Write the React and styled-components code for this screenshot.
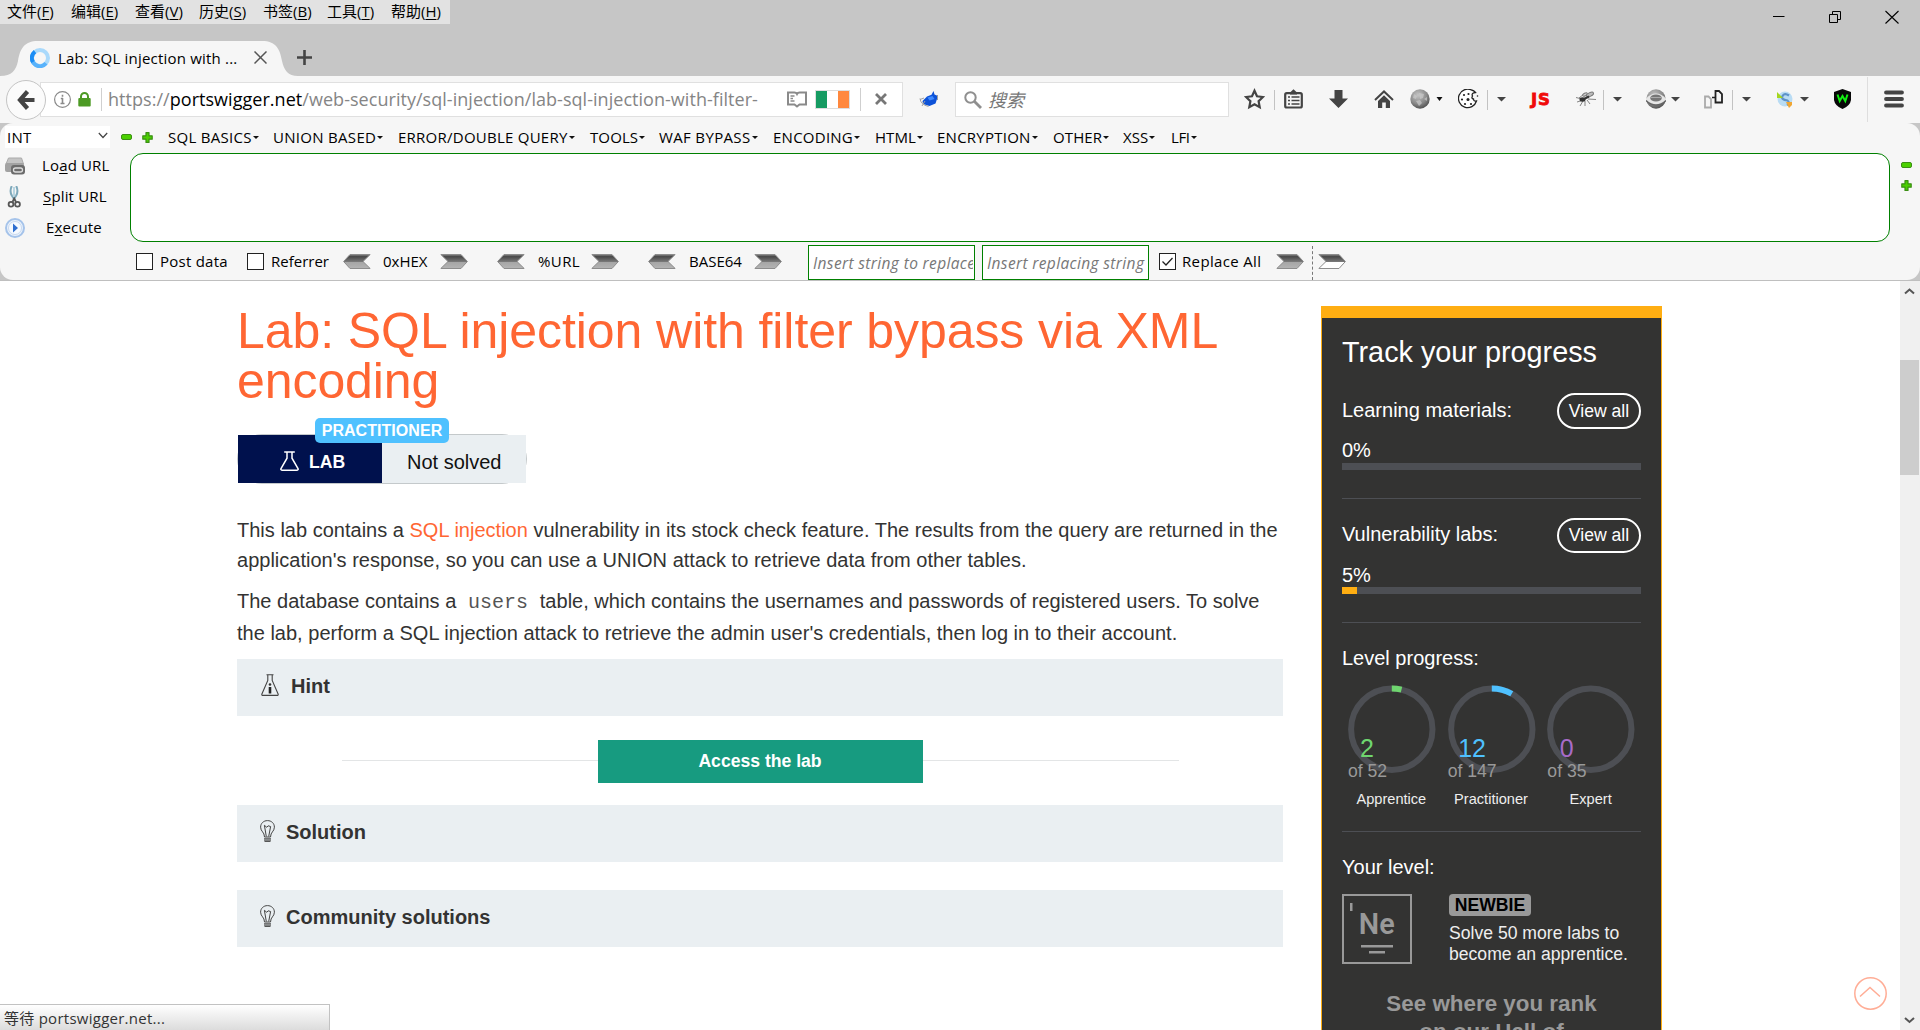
import React from 'react';
import styled, { createGlobalStyle } from 'styled-components';

const UI = `"Open Sans", "Noto Sans CJK SC", sans-serif`;
const WEB = `"Liberation Sans", Arial, sans-serif`;

const Global = createGlobalStyle`
  * { box-sizing: border-box; }
  html, body { margin: 0; padding: 0; background: #fff; overflow: hidden; }
  svg { display: block; flex: none; }
`;

const Window = styled.div`
  width: 1920px;
  height: 1030px;
  display: flex;
  flex-direction: column;
  overflow: hidden;
  position: relative;
  font-family: ${UI};
  font-size: 15px;
  color: #000;
  background: #c6c6c6;
`;

/* ---------- title bar ---------- */
const TitleBar = styled.header`
  height: 76px;
  flex: none;
  display: flex;
  justify-content: space-between;
  background: #c6c6c6;
`;
const TitleLeft = styled.div`
  display: flex;
  flex-direction: column;
  justify-content: space-between;
`;
const MenuBar = styled.nav`
  width: 450px;
  height: 24px;
  padding-left: 7px;
  display: flex;
  background: #e2e2e2;
`;
const MenuEntry = styled.span`
  width: 64px;
  flex: none;
  line-height: 22px;
  white-space: nowrap;
  u { text-underline-offset: 2px; }
`;
const TabStrip = styled.div`
  display: flex;
  height: 35px;
`;
const Tab = styled.div`
  width: 298px;
  height: 35px;
  padding: 0 0 1px 30px;
  display: flex;
  align-items: center;
  background: #f6f6f6;
  clip-path: path('M0 35 C12 35 16 29 18 20 C20 8 24 0 38 0 H262 C276 0 280 8 282 20 C284 29 288 35 298 35 Z');
`;
const TabTitle = styled.span`
  width: 204px;
  flex: none;
  padding-left: 8px;
  line-height: 32px;
  letter-spacing: 0.2px;
  white-space: nowrap;
`;
const NewTab = styled.div`
  margin-left: -1px;
  display: flex;
  align-items: center;
  height: 33px;
`;
const WindowButtons = styled.div`
  display: flex;
  gap: 43px;
  padding: 10px 21px 0 0;
`;

/* ---------- navigation toolbar ---------- */
const NavBar = styled.div`
  height: 47px;
  flex: none;
  display: flex;
  align-items: center;
  padding-left: 6px;
  background: #f6f6f6;
`;
const Back = styled.div`
  width: 40px;
  height: 40px;
  flex: none;
  border: 1px solid #c4c4c4;
  border-radius: 50%;
  background: #fbfbfb;
  display: flex;
  align-items: center;
  justify-content: center;
  z-index: 1;
`;
const Field = styled.div`
  width: ${p => p.$w}px;
  height: 35px;
  margin-left: ${p => p.$ml}px;
  padding-left: ${p => p.$pl}px;
  flex: none;
  display: flex;
  align-items: center;
  border: 1px solid #e0e0e0;
  background: #fff;
`;
const UrlText = styled.span`
  width: 685px;
  flex: none;
  padding-left: 6px;
  font-size: 18px;
  line-height: 30px;
  padding-bottom: 1px;
  letter-spacing: 0.04px;
  color: #858585;
  white-space: nowrap;
  b { font-weight: 400; color: #000; }
`;
const SearchText = styled.span`
  padding-left: 6px;
  font-size: 18px;
  line-height: 32px;
  font-style: italic;
  color: #777;
`;
const Flag = styled.div`
  width: 35px;
  height: 19px;
  margin-left: 8px;
  flex: none;
  border: 1px solid #ddd;
  background: linear-gradient(90deg, #169b62 0 33.3%, #fff 33.3% 66.6%, #ff883e 66.6%);
`;
const Bar = styled.i`
  width: 1px;
  height: ${p => p.$h || 20}px;
  margin-left: ${p => p.$ml}px;
  flex: none;
  background: ${p => p.$c || '#c2c2c2'};
`;
const Slot = styled.div`
  margin-left: ${p => p.$ml || 0}px;
  flex: none;
  display: flex;
`;
const NavIcon = styled.div`
  height: 46px;
  margin-left: ${p => p.$ml || 0}px;
  align-self: flex-start;
  flex: none;
  display: flex;
  align-items: center;
`;
const JsMark = styled.b`
  margin-left: 25px;
  width: 21px;
  flex: none;
  font: 900 16.5px/20px "DejaVu Sans", sans-serif;
  letter-spacing: 0.8px;
  color: #f00a0a;
  -webkit-text-stroke: 0.8px #f00a0a;
`;

/* ---------- tools panel ---------- */
const Panel = styled.section`
  height: 157px;
  display: flex;
  background: #f6f6f6;
  border-radius: 13px;
`;
const PanelBack = styled.div`
  flex: none;
  height: 158px;
  background: #c6c6c6;
  border-bottom: 1px solid #bfbfbf;
`;
const LeftCol = styled.div`
  width: 130px;
  flex: none;
  padding: 3px 0 0 5px;
`;
const Select = styled.div`
  width: 105px;
  height: 22px;
  padding: 0 2px 0 2px;
  display: flex;
  justify-content: space-between;
  line-height: 23px;
  letter-spacing: 0.2px;
  background: #fff;
`;
const Actions = styled.div`
  padding-top: 2px;
`;
const Action = styled.div`
  height: 31px;
  display: flex;
  align-items: center;
`;
const ActionLabel = styled.span`
  margin-left: ${p => p.$ml}px;
  padding-bottom: 2px;
  white-space: nowrap;
  line-height: 20px;
  letter-spacing: 0.15px;
  u { text-underline-offset: 2px; }
`;
const MidCol = styled.div`
  width: 1760px;
  flex: none;
`;
const PayloadMenu = styled.div`
  height: 30px;
  display: flex;
  align-items: center;
  margin-left: -9px;
  padding-bottom: 2px;
`;
const PayloadItem = styled.span`
  width: ${p => p.$w}px;
  flex: none;
  display: flex;
  align-items: center;
  line-height: 20px;
  white-space: nowrap;
  letter-spacing: ${p => p.$ls}px;
  &::after {
    content: '';
    margin: 0 0 0 1px;
    border: 3px solid transparent;
    border-top-color: #111;
    border-bottom: 0;
  }
`;
const TextArea = styled.div`
  height: 89px;
  border: 1px solid #008000;
  border-radius: 13px;
  background: #fff;
`;
const OptionRow = styled.div`
  height: 38px;
  padding-left: 6px;
  display: flex;
  align-items: center;
`;
const Check = styled.div`
  width: 17px;
  height: 17px;
  margin-left: ${p => p.$ml || 0}px;
  flex: none;
  border: 1px solid #222;
  background: #fff;
`;
const Label = styled.span`
  width: ${p => p.$w}px;
  margin-left: ${p => p.$ml}px;
  flex: none;
  line-height: 20px;
  white-space: nowrap;
  letter-spacing: ${p => p.$ls || 0}px;
`;
const ReplaceInput = styled.div`
  width: 167px;
  height: 35px;
  margin: 3px 0 0 ${p => p.$ml}px;
  padding-left: 4px;
  flex: none;
  border: 1px solid #008000;
  background: #fff;
  font-size: 15.5px;
  font-style: italic;
  line-height: 34px;
  letter-spacing: 0.36px;
  white-space: nowrap;
  color: #777;
  span { display: block; width: 160px; overflow: hidden; }
`;
const Dashes = styled.i`
  width: 0;
  height: 34px;
  margin: 3px 0 0 8px;
  border-left: 1px dashed #777;
`;
const RightCol = styled.div`
  padding: 39px 0 0 11px;
  display: flex;
  flex-direction: column;
  gap: 12px;
`;

/* ---------- page ---------- */
const Viewport = styled.main`
  flex: 1;
  min-height: 0;
  display: flex;
  overflow: hidden;
  background: #fff;
  font-family: ${WEB};
  font-size: 20px;
  color: #333332;
`;
const Article = styled.article`
  width: 1046px;
  margin-left: 237px;
  padding-top: 25px;
  flex: none;
`;
const Heading = styled.h1`
  margin: 0;
  font-size: 50px;
  line-height: 50px;
  font-weight: 400;
  letter-spacing: -0.08px;
  color: #ff6633;
`;
const LabStatus = styled.div`
  position: relative;
  width: 290px;
  height: 50px;
  margin-top: 28px;
  border: 1px solid #c4c9cb;
  border-radius: 25px;
  display: flex;
`;
const LabTag = styled.div`
  width: 144px;
  height: 48px;
  padding: 6px 0 0 42px;
  display: flex;
  align-items: center;
  gap: 10px;
  background: #00114d;
  color: #fff;
  font-weight: 700;
  font-size: 17.6px;
  svg { margin-bottom: 2px; }
`;
const Status = styled.div`
  width: 144px;
  height: 48px;
  padding-left: 25px;
  line-height: 54px;
  background: #eaeff2;
  color: #111;
  white-space: nowrap;
`;
const Level = styled.div`
  position: absolute;
  top: -17px;
  left: 77px;
  width: 134px;
  height: 25px;
  border-radius: 5px;
  background: #4fc1ff;
  color: #fff;
  font-size: 16px;
  line-height: 25px;
  font-weight: 700;
  letter-spacing: 0.05px;
  text-align: center;
`;
const Para = styled.p`
  margin: ${p => p.$mt}px 0 0;
  line-height: ${p => p.$lh}px;
  white-space: nowrap;
  letter-spacing: 0.01px;
  a { color: #ff6633; }
  code {
    padding: 0 6.2px;
    font: 20px/20px "Liberation Mono", monospace;
    color: #555;
    letter-spacing: 0;
  }
`;
const Fold = styled.div`
  height: 57px;
  margin-top: ${p => p.$mt}px;
  padding: 0 0 3px ${p => p.$pl}px;
  display: flex;
  align-items: center;
  gap: ${p => p.$gap}px;
  background: #eaeff2;
  font-weight: 700;
  svg { margin-bottom: 2px; }
`;
const Launch = styled.div`
  margin: 24px 104px 22px 105px;
  display: flex;
  align-items: center;
  &::before, &::after {
    content: '';
    flex: 1;
    height: 1px;
    margin-bottom: 2px;
    background: #e3e5e6;
  }
`;
const LaunchButton = styled.div`
  width: 325px;
  height: 43px;
  padding-right: 1px;
  background: #179b80;
  color: #fff;
  font-size: 17.6px;
  line-height: 42px;
  font-weight: 700;
  text-align: center;
`;
const Sidebar = styled.aside`
  width: 341px;
  height: 800px;
  margin: 25px 0 0 38px;
  padding: 17px 20px 0;
  flex: none;
  border: 1px solid #ffae12;
  border-top-width: 12px;
  background: #333332;
  color: #fff;
`;
const SideTitle = styled.h2`
  margin: 0 0 23px;
  font-size: 28.8px;
  line-height: 35px;
  font-weight: 400;
  white-space: nowrap;
`;
const Meter = styled.div`
  height: ${p => p.$h}px;
  margin-bottom: 19px;
  border-bottom: 1px solid #4d4f54;
`;
const MeterHead = styled.div`
  height: ${p => p.$h}px;
  display: flex;
  justify-content: space-between;
  line-height: ${p => p.$h === 36 ? 34 : 32}px;
`;
const ViewAll = styled.span`
  width: 84px;
  border: 2px solid #fff;
  border-radius: 18px;
  font-size: 17.6px;
  line-height: ${p => p.$lh}px;
  text-align: center;
`;
const Percent = styled.div`
  height: 25px;
  margin-top: 9px;
  line-height: ${p => p.$lh}px;
`;
const Track = styled.div`
  height: 7px;
  background: #4d4f54;
`;
const TrackFill = styled.div`
  width: ${p => p.$v}%;
  height: 7px;
  background: #ffae12;
`;
const SideLabel = styled.div`
  margin-top: ${p => p.$mt}px;
  line-height: 24px;
`;
const Rings = styled.div`
  height: 147px;
  margin-top: 15px;
  display: flex;
  border-bottom: 1px solid #4d4f54;
`;
const Ring = styled.div`
  flex: 1;
  position: relative;
  display: flex;
  flex-direction: column;
  align-items: center;
`;
const Count = styled.span`
  position: absolute;
  top: 51px;
  left: ${p => p.$x}px;
  font-size: 25px;
  line-height: 25px;
  color: ${p => p.$c};
`;
const Total = styled.span`
  position: absolute;
  top: 76px;
  left: 6px;
  font-size: 17.6px;
  line-height: 20px;
  color: #999;
`;
const RingName = styled.span`
  margin: 17px 0 0 -1px;
  font-size: 14.6px;
  line-height: 18px;
  color: #eee;
`;
const LevelRow = styled.div`
  margin-top: 15px;
  display: flex;
  gap: 37px;
`;
const LevelInfo = styled.div`
  font-size: 17.6px;
  line-height: 21.1px;
  color: #eee;
  white-space: nowrap;
`;
const Newbie = styled.div`
  width: 82px;
  height: 22px;
  margin-bottom: 7px;
  border-radius: 4px;
  background: #999;
  color: #000;
  font-weight: 700;
  line-height: 23px;
  text-align: center;
`;
const Rank = styled.div`
  margin-top: 25px;
  font-size: 22.4px;
  line-height: 27.5px;
  font-weight: 700;
  text-align: center;
  color: #999;
`;
const Scroll = styled.div`
  width: 20px;
  margin-left: auto;
  display: flex;
  flex-direction: column;
  justify-content: space-between;
  background: #f0f0f0;
`;
const Thumb = styled.div`
  width: 19px;
  height: 115px;
  margin: 64px 0 auto;
  background: #cdcdcd;
`;
const ToTop = styled.div`
  position: absolute;
  left: 1854px;
  top: 977px;
`;
const StatusTip = styled.div`
  position: absolute;
  left: 0;
  bottom: 0;
  width: 330px;
  height: 26px;
  padding-left: 4px;
  border: 1px solid #c2c2c2;
  border-left: 0;
  border-bottom: 0;
  background: linear-gradient(#fff, #dcdcdc);
  color: #333;
  line-height: 26px;
  letter-spacing: 0.26px;
`;

/* ---------- icons ---------- */
const Minus = () => (
  <svg width="11" height="6" viewBox="0 0 11 6"><rect x=".5" y=".5" width="10" height="5" rx="1.5" fill="#4bd000" stroke="#3b8f14" /></svg>
);
const Plus = () => (
  <svg width="11" height="11" viewBox="0 0 11 11"><path d="M4 .6h3v3.2h3.2v3.4H7v3.2H4V7.2H.8V3.8H4z" fill="#4bd000" stroke="#3b8f14" strokeWidth="1.2" strokeLinejoin="round" /></svg>
);
const Caret = () => (
  <svg width="9" height="6" viewBox="0 0 9 6"><path d="M0 1h9L4.5 5.500z" fill="#444" /></svg>
);
const Arrow = ({ left, hollow }) => (
  <svg width="28" height="15" viewBox="0 0 28 15">
    <defs>
      <linearGradient id={hollow ? 'ah' : 'as'} x1="0" y1="0" x2="0" y2="1">
        <stop offset="0" stopColor="#8a8a8a" /><stop offset=".15" stopColor="#484848" /><stop offset=".5" stopColor="#777" />
        <stop offset=".55" stopColor={hollow ? '#fff' : '#a6a6a6'} /><stop offset="1" stopColor={hollow ? '#fff' : '#b4b4b4'} />
      </linearGradient>
    </defs>
    <path transform={left ? 'matrix(-1 0 0 1 28 0)' : undefined} d="M.8.5H21l6.4 7L21 14.5H.8L8 7.5z" fill={`url(#${hollow ? 'ah' : 'as'})`} stroke="#8d8d8d" />
  </svg>
);
const Flask = () => (
  <svg width="19" height="20" viewBox="0 0 19 20" fill="none" stroke="#fff" strokeWidth="1.500">
    <path d="M4.200 1h10.600M7 1.200v6L1 17.500q-.6 1.600 1 1.700h15q1.600-.1 1-1.700L12 7.200v-6" />
  </svg>
);
const InfoFlask = () => (
  <svg width="18" height="22" viewBox="0 0 18 22" fill="none" stroke="#444" strokeWidth="1.1">
    <path d="M5.500.8h7M6.800 1v5.500L.8 20.200q-.2 1.200 1 1.200h14.400q1.200 0 1-1.200L11.200 6.500V1" />
    <circle cx="9" cy="10.500" r="1.300" fill="#333" stroke="none" /><path d="M9 13v6.500" stroke="#222" strokeWidth="2.600" />
  </svg>
);
const Bulb = () => (
  <svg width="15" height="22" viewBox="0 0 15 22" fill="none" stroke="#444" strokeWidth="1">
    <path d="M4.500 17C4.500 12 .6 11.500.6 7.200.6 3.300 3.600.6 7.500.6s6.900 2.700 6.900 6.600C14.400 11.500 10.500 12 10.500 17zM6.300 16.500 4.400 5.300l2.400 2 1.300-1.500 2.500.7-1.900 10M4 18.800h7M4 20.100h7M4.500 21.400h6" />
  </svg>
);
const Sphere = ({ children }) => (
  <svg width="20" height="20" viewBox="0 0 20 20">
    <defs><radialGradient id="sph" cx=".4" cy=".3" r=".75"><stop offset="0" stopColor="#c4c4c4" /><stop offset=".6" stopColor="#8a8a8a" /><stop offset="1" stopColor="#4a4a4a" /></radialGradient></defs>
    <circle cx="10" cy="10" r="9.700" fill="url(#sph)" />{children}
  </svg>
);

const RingChart = ({ value, total, color }) => {
  const r = 40.7;
  const c = 2 * Math.PI * r;
  return (
    <svg width="88" height="88" viewBox="0 0 88 88" fill="none" strokeWidth="6">
      <circle cx="43.800" cy="44.200" r={r} stroke="#4d4f54" />
      {value > 0 && <circle cx="43.800" cy="44.200" r={r} stroke={color} strokeDasharray={`${c * value / total} ${c}`} transform="rotate(-90 43.800 44.200)" />}
    </svg>
  );
};

const menus = [['文件', 'F'], ['编辑', 'E'], ['查看', 'V'], ['历史', 'S'], ['书签', 'B'], ['工具', 'T'], ['帮助', 'H']];
const payloads = [
  ['SQL BASICS', 105, 0.3], ['UNION BASED', 125, 0.3], ['ERROR/DOUBLE QUERY', 192, 0.25], ['TOOLS', 69, 0.1], ['WAF BYPASS', 114, 0.35],
  ['ENCODING', 102, 0.25], ['HTML', 62, 0.05], ['ENCRYPTION', 116, 0.25], ['OTHER', 70, 0.1], ['XSS', 48, 0.05], ['LFI', 40, -0.4],
];
const rings = [
  ['Apprentice', 2, 52, '#6fd66f', 18], ['Practitioner', 12, 147, '#4fc1ff', 16.5], ['Expert', 0, 35, '#a86bc9', 18.5],
];

export default function App() {
  return (
    <Window>
      <Global />
      <TitleBar>
        <TitleLeft>
          <MenuBar>{menus.map(([t, k]) => <MenuEntry key={k}>{t}(<u>{k}</u>)</MenuEntry>)}</MenuBar>
          <TabStrip>
            <Tab>
              <svg width="20" height="20" viewBox="0 0 20 20" fill="none" strokeWidth="4">
                <circle cx="10" cy="10" r="8" stroke="#a9d9fb" />
                <path d="M16 15.300A8 8 0 0 1 2.500 7" stroke="#58b2fb" />
                <path d="M3 14A8 8 0 0 1 5 3.700" stroke="#1b8df5" />
              </svg>
              <TabTitle>Lab: SQL injection with ...</TabTitle>
              <svg width="13" height="14" viewBox="0 0 13 14" stroke="#555" strokeWidth="1.500"><path d="M.5.5l12 12M12.500.5l-12 12" /></svg>
            </Tab>
            <NewTab><svg width="15" height="15" viewBox="0 0 15 15" stroke="#444" strokeWidth="2.600"><path d="M7.500 0v15M0 7.500h15" /></svg></NewTab>
          </TabStrip>
        </TitleLeft>
        <WindowButtons>
          <svg width="13" height="14" viewBox="0 0 13 14"><path d="M-.5 6.500h12" stroke="#000" /></svg>
          <svg width="13" height="14" viewBox="0 0 13 14" fill="none" stroke="#000"><path d="M.5 4.500h8v8h-8zM3.500 4V1.500h8v8H9" /></svg>
          <svg width="14" height="14" viewBox="0 0 14 14" stroke="#000" strokeWidth="1.100"><path d="M.5 1l13 12.500M13.500 1L.5 13.500" /></svg>
        </WindowButtons>
      </TitleBar>

      <NavBar>
        <Back>
          <svg width="18" height="20" viewBox="0 0 18 20" fill="none" stroke="#444" strokeWidth="4.200"><path d="M10.500 1.500 3 10l7.500 8.500M3.500 10H17.500" /></svg>
        </Back>
        <Field $w={863} $ml={-6} $pl={13}>
          <svg width="17" height="17" viewBox="0 0 17 17" fill="none" stroke="#8a8a8a"><circle cx="8.500" cy="8.500" r="7.900" strokeWidth="1.200" /><path d="M8.500 3.800v2M8.500 7v5.500M6.800 7.500H9M6.500 12.500h4" strokeWidth="1.600" /></svg>
          <Slot $ml={7}><svg width="13" height="15" viewBox="0 0 13 15"><path d="M3 7V4.500a3.500 3.500 0 0 1 7 0V7" fill="none" stroke="#4c9a24" strokeWidth="2" /><rect x=".3" y="6" width="12.400" height="8.600" rx="1" fill="#4c9a24" /></svg></Slot>
          <Bar $ml={10} $h={23} $c="#d0d0d0" />
          <UrlText>https://<b>portswigger.net</b>/web-security/sql-injection/lab-sql-injection-with-filter-</UrlText>
          <svg width="20" height="17" viewBox="0 0 20 17" fill="none" stroke="#8a8a8a"><path d="M1 1.500h6.500Q9.200 1.500 10 3q.8-1.500 2.500-1.500H19v12h-6.500l-2.500 2-2.500-2H1z" strokeWidth="2" /><path d="M3.500 5h4M3.500 7.500H6M3.500 10h4" strokeWidth="1.300" /></svg>
          <Flag />
          <Bar $ml={10} $h={23} $c="#cfcfcf" />
          <Slot $ml={14}><svg width="12" height="13" viewBox="0 0 12 13" stroke="#777" strokeWidth="2.800"><path d="M1 1l10 10M11 1L1 11" /></svg></Slot>
        </Field>
        <NavIcon $ml={16}>
          <svg width="20" height="20" viewBox="0 0 20 20"><path d="M3.500 12 8 7.500l4.500-1.700L14.500 2l1 3.500L19 7l-2.500 7.500-6 2.500-6.500-2z" fill="#0d52d8" /><path d="M8.500 8.500l5-1.500 2 3-5 1.500z" fill="#3f8aff" /><path d="M1 9.500q.5 6 8.500 8M18.500 6v5M1 10.500l4-1.500M6 12l-3 5" stroke="#a0a0a0" fill="none" /></svg>
        </NavIcon>
        <Field $w={274} $ml={16} $pl={8}>
          <svg width="18" height="18" viewBox="0 0 18 18" fill="none" stroke="#8f8f8f"><circle cx="6.500" cy="6.500" r="5.200" strokeWidth="2" /><path d="M10.500 10.500 17 17" strokeWidth="2.800" /></svg>
          <SearchText>搜索</SearchText>
        </Field>
        <NavIcon $ml={15}><svg width="21" height="22" viewBox="0 0 21 22"><path d="M10.500 2.700l2.500 5.600 6 .7-4.400 4.200 1.100 6-5.200-3-5.200 3 1.100-6L2 9l6-.7z" fill="none" stroke="#444" strokeWidth="2.200" /></svg></NavIcon>
        <Bar $ml={9} />
        <NavIcon $ml={9}><svg width="19" height="20" viewBox="0 0 19 20"><rect x="1.200" y="4.200" width="16.600" height="14.300" rx="1.500" fill="none" stroke="#444" strokeWidth="2.200" /><path d="M6 3.500 9.500.3 13 3.500v2H6z" fill="#444" /><path d="M4 8h2M7.500 8h8M4 11.500h2M7.500 11.500h8M4 15h2M7.500 15h8" stroke="#444" strokeWidth="1.700" /></svg></NavIcon>
        <NavIcon $ml={26}><svg width="19" height="18" viewBox="0 0 19 18"><path d="M5.500 0h8v8.500h5.500L9.500 18 0 8.500h5.500z" fill="#444" /></svg></NavIcon>
        <NavIcon $ml={26}><svg width="20" height="18" viewBox="0 0 20 18"><path d="M1 10 10 1.500 19 10" fill="none" stroke="#444" strokeWidth="2" /><path d="M4 11l6-5.700 6 5.700v7h-4.200v-5.500H8.200V18H4z" fill="#444" /></svg></NavIcon>
        <NavIcon $ml={16}><Sphere><path d="M4 5l3 2-1 3-3-1zM9 4l5 1-1 4-3 1zM6 12l4-1 2 3-3 3zM14 10l3-2v4z" fill="#c9c9c9" opacity=".7" /></Sphere></NavIcon>
        <NavIcon $ml={6}><svg width="7" height="4" viewBox="0 0 7 4"><path d="M.5 0h6l-3 4z" fill="#111" /></svg></NavIcon>
        <NavIcon $ml={15}><svg width="21" height="20" viewBox="0 0 21 20"><path d="M13.500 1A9.200 9.200 0 1 0 18.500 12q-3 .5-3-2-2.500-.5-1-3-1.500-3 3-3.500Q16 1.500 13.500 1z" fill="#fff" stroke="#222" strokeWidth="1.300" /><g fill="#222"><circle cx="6" cy="6" r="1.100" /><circle cx="10.500" cy="5" r="1.100" /><circle cx="4" cy="10.500" r="1.100" /><circle cx="10" cy="10.500" r="1.500" /><circle cx="7" cy="15" r="1.100" /><circle cx="13" cy="15" r="1.100" /><circle cx="19.500" cy="7" r=".8" /></g></svg></NavIcon>
        <Bar $ml={8} /><NavIcon $ml={9}><Caret /></NavIcon>
        <JsMark>JS</JsMark>
        <NavIcon $ml={24}><svg width="20" height="18" viewBox="0 0 20 18" fill="none" stroke="#777" strokeWidth=".9"><path d="M3 8 8 4M0 7.500l6 1.500M4 16l3-5M9 16l0-5M12 9l8 .5M11 10l3 4M1 12l5-1.500" /><ellipse cx="6.500" cy="9.500" rx="3" ry="2.200" fill="#333" stroke="none" /><ellipse cx="9" cy="4.500" rx="2.600" ry="1.400" transform="rotate(-25 9 4.500)" fill="#ccc" /><ellipse cx="14" cy="4.500" rx="3.800" ry="1.800" transform="rotate(-25 14 4.500)" fill="#bbb" /><path d="M8 9l5-2.500" stroke="#333" strokeWidth="2" /></svg></NavIcon>
        <Bar $ml={7} /><NavIcon $ml={9}><Caret /></NavIcon>
        <NavIcon $ml={24}><Sphere><path d="M0 9.500q10-10 20 0v2q-10 9-20 0z" fill="#e6e6e6" /><ellipse cx="10" cy="9" rx="5.800" ry="3.600" fill="#777" /><path d="M5 8.500h10" stroke="#aaa" /><path d="M0 11.500q10 9 20 0" fill="none" stroke="#666" strokeWidth="1.400" /></Sphere></NavIcon>
        <NavIcon $ml={5}><Caret /></NavIcon>
        <NavIcon $ml={24}><svg width="19" height="20" viewBox="0 0 19 20" fill="none"><path d="M1 7.500h3.500L7 10v8.500H1z" stroke="#aaa" strokeWidth="1.800" /><path d="M11.500 2h3.500l3 3v8.500h-6.500z" stroke="#222" strokeWidth="1.800" /><path d="M8 8.500h3" stroke="#222" strokeWidth="1.500" /></svg></NavIcon>
        <Bar $ml={9} /><NavIcon $ml={9}><Caret /></NavIcon>
        <NavIcon $ml={25}><svg width="18" height="20" viewBox="0 0 18 20" fill="none"><circle cx="9" cy="10" r="7.500" fill="#b9dcf4" /><path d="M13 6.500Q8.500 3.500 6.500 7t5 4.500q3 2.500-.5 4.500" stroke="#5f93c8" strokeWidth="2.200" /><path d="M1 3v6h6L4.500 6.500z" fill="#a5d61f" /><path d="M10 13h6v3l-3 3z" fill="#f0a633" /></svg></NavIcon>
        <NavIcon $ml={6}><Caret /></NavIcon>
        <NavIcon $ml={25}><svg width="17" height="20" viewBox="0 0 17 20"><path d="M8.500 0 17 3v8q-1 6-8.500 9Q1 17 0 11V3z" fill="#080808" /><path d="M3.500 5.500 5.700 12l2.800-5 2.800 5 2.200-6.500" fill="none" stroke="#12f012" strokeWidth="2" /></svg></NavIcon>
        <Bar $ml={16} $h={45} $c="#dedede" />
        <NavIcon $ml={16}><svg width="20" height="18" viewBox="0 0 20 18" stroke="#444" strokeWidth="3.800" strokeLinecap="round"><path d="M2 2.500h16M2 9h16M2 15.500h16" /></svg></NavIcon>
      </NavBar>

      <PanelBack>
        <Panel>
          <LeftCol>
            <Select>INT<svg width="10" height="14" viewBox="0 0 10 14" fill="none" stroke="#444" strokeWidth="1.200"><path d="M.8 7 5 11.500 9.200 7" /></svg></Select>
            <Actions>
              <Action>
                <svg width="20" height="18" viewBox="0 0 20 18"><path d="M3.500 1h13l2 6H1z" fill="#c4c4c4" stroke="#aaa" /><rect x="0" y="6" width="19" height="9" rx="2" fill="#a2a2a2" /><rect x="6" y="8" width="14" height="9.500" rx="3" fill="#6c6c6c" /><rect x="8.500" y="11" width="9" height="4" rx="2" fill="none" stroke="#ddd" strokeWidth="1.300" /></svg>
                <ActionLabel $ml={17}>Lo<u>a</u>d URL</ActionLabel>
              </Action>
              <Action>
                <svg width="20" height="22" viewBox="0 0 20 22" fill="none"><path d="M6.800 0q-2.500 5 0 9.500L9 13M11.200 0q2.500 5 0 9.500L9 13" stroke="#7fa9bb" strokeWidth="2" /><path d="M9 1v10" stroke="#b9d6e2" strokeWidth="2" /><circle cx="6" cy="18.200" r="2.400" stroke="#555" strokeWidth="1.800" /><circle cx="12.500" cy="18.200" r="2.400" stroke="#555" strokeWidth="1.800" /><path d="M7.500 16 9.200 12.500l1.800 3.500" stroke="#555" strokeWidth="1.800" /></svg>
                <ActionLabel $ml={18}><u>S</u>plit URL</ActionLabel>
              </Action>
              <Action>
                <svg width="20" height="20" viewBox="0 0 20 20"><circle cx="10" cy="10" r="9" fill="#e9f1fb" stroke="#a5c3ea" strokeWidth="2" /><circle cx="10" cy="10" r="6.500" fill="#f6faff" stroke="#c9d9ef" /><path d="M8 5.500v9l5-4.500z" fill="#2f6fd0" /></svg>
                <ActionLabel $ml={21}>E<u>x</u>ecute</ActionLabel>
              </Action>
            </Actions>
          </LeftCol>
          <MidCol>
            <PayloadMenu>
              <Minus /><Slot $ml={10} /><Plus /><Slot $ml={15} />
              {payloads.map(([t, w, ls]) => <PayloadItem key={t} $w={w} $ls={ls}>{t}</PayloadItem>)}
            </PayloadMenu>
            <TextArea />
            <OptionRow>
              <Check /><Label $ml={7} $w={87} $ls={0.25}>Post data</Label>
              <Check /><Label $ml={7} $w={72}>Referrer</Label>
              <Arrow left /><Label $ml={12} $w={57}>0xHEX</Label><Arrow />
              <Slot $ml={29} /><Arrow left /><Label $ml={13} $w={53} $ls={0.4}>%URL</Label><Arrow />
              <Slot $ml={29} /><Arrow left /><Label $ml={13} $w={65}>BASE64</Label><Arrow />
              <ReplaceInput $ml={26}><span>Insert string to replace</span></ReplaceInput>
              <ReplaceInput $ml={7}><span>Insert replacing string</span></ReplaceInput>
              <Check $ml={10}><svg width="15" height="15" viewBox="0 0 15 15" fill="none" stroke="#222" strokeWidth="1.300"><path d="M2.500 7.500 6 11l6.500-7" /></svg></Check>
              <Label $ml={6} $w={94} $ls={0.35}>Replace All</Label>
              <Arrow /><Dashes /><Slot $ml={5} /><Arrow hollow />
            </OptionRow>
          </MidCol>
          <RightCol><Minus /><Plus /></RightCol>
        </Panel>
      </PanelBack>

      <Viewport>
        <Article>
          <Heading>Lab: SQL injection with filter bypass via XML encoding</Heading>
          <LabStatus>
            <LabTag><Flask />LAB</LabTag>
            <Status>Not solved</Status>
            <Level>PRACTITIONER</Level>
          </LabStatus>
          <Para $mt={31} $lh={30}>This lab contains a <a>SQL injection</a> vulnerability in its stock check feature. The results from the query are returned in the<br />application's response, so you can use a UNION attack to retrieve data from other tables.</Para>
          <Para $mt={11} $lh={31.5}>The database contains a <code>users</code> table, which contains the usernames and passwords of registered users. To solve<br />the lab, perform a SQL injection attack to retrieve the admin user's credentials, then log in to their account.</Para>
          <Fold $mt={10} $pl={24} $gap={12}><InfoFlask />Hint</Fold>
          <Launch><LaunchButton>Access the lab</LaunchButton></Launch>
          <Fold $mt={0} $pl={23} $gap={11}><Bulb />Solution</Fold>
          <Fold $mt={28} $pl={23} $gap={11}><Bulb />Community solutions</Fold>
        </Article>
        <Sidebar>
          <SideTitle>Track your progress</SideTitle>
          <Meter $h={106}>
            <MeterHead $h={36}>Learning materials:<ViewAll $lh={32}>View all</ViewAll></MeterHead>
            <Percent $lh={25}>0%</Percent>
            <Track />
          </Meter>
          <Meter $h={105}>
            <MeterHead $h={35}>Vulnerability labs:<ViewAll $lh={30}>View all</ViewAll></MeterHead>
            <Percent $lh={27}>5%</Percent>
            <Track><TrackFill $v={5} /></Track>
          </Meter>
          <SideLabel $mt={23}>Level progress:</SideLabel>
          <Rings>
            {rings.map(([n, v, t, c, x]) => (
              <Ring key={n}>
                <RingChart value={v} total={t} color={c} />
                <Count $x={x} $c={c}>{v}</Count>
                <Total>of {t}</Total>
                <RingName>{n}</RingName>
              </Ring>
            ))}
          </Rings>
          <SideLabel $mt={23}>Your level:</SideLabel>
          <LevelRow>
            <svg width="70" height="70" viewBox="0 0 70 70">
              <rect x="1" y="1" width="68" height="68" fill="none" stroke="#999" strokeWidth="2" />
              <path d="M8 9h2.500v8H8zM19 51h32v2.500H19zM27 57h16v2.500H27z" fill="#999" />
              <text x="16.800" y="39.500" fontFamily="Roboto, sans-serif" fontWeight="600" fontSize="28.800" fill="#999">Ne</text>
            </svg>
            <LevelInfo>
              <Newbie>NEWBIE</Newbie>
              Solve 50 more labs to<br />become an apprentice.
            </LevelInfo>
          </LevelRow>
          <Rank>See where you rank<br />on our Hall of</Rank>
        </Sidebar>
        <Scroll>
          <svg width="20" height="15" viewBox="0 0 20 15" fill="none" stroke="#555" strokeWidth="2"><path d="M5 12.500 9.500 8.500 14 12.500" /></svg>
          <Thumb />
          <svg width="20" height="16" viewBox="0 0 20 16" fill="none" stroke="#555" strokeWidth="2"><path d="M5 4 9.500 8 14 4" /></svg>
        </Scroll>
      </Viewport>

      <ToTop>
        <svg width="33" height="33" viewBox="0 0 33 33" fill="none" stroke="#ffad96" strokeWidth="1.500"><circle cx="16.500" cy="16.500" r="15.700" /><path d="M6 19.500 16 10.500 26 19.500" /></svg>
      </ToTop>
      <StatusTip>等待 portswigger.net...</StatusTip>
    </Window>
  );
}
